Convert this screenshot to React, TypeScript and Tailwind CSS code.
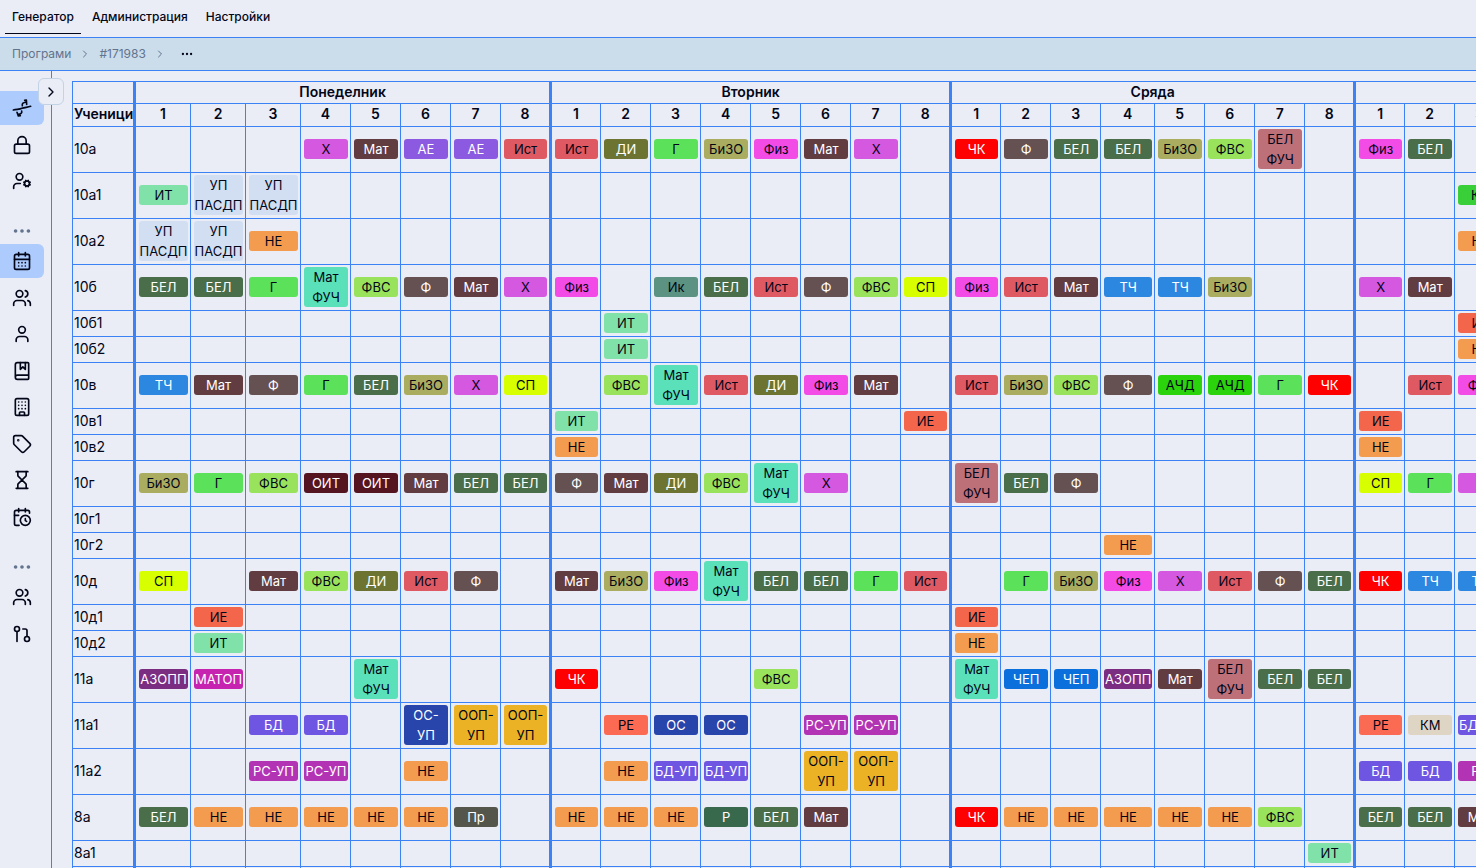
import { Fragment } from 'react';
import type { ReactNode } from 'react';
import clsx from 'clsx';
import {
  BookMarked,
  Building,
  CalendarClock,
  CalendarDays,
  ChevronRight,
  Ellipsis,
  GitPullRequest,
  Hourglass,
  Lock,
  Tag,
  User,
  UserCog,
  Users,
} from 'lucide-react';

type Lessons = Record<number, string>;

type Row = {
  name: string;
  days: Lessons[];
};

const DARK = 'text-slate-950';

const SUBJECTS: Record<string, string> = {
  Х: `bg-[#d558e0] ${DARK}`,
  Мат: 'bg-[#613d42] text-white',
  АЕ: 'bg-[#8c5ae0] text-white',
  Ист: `bg-[#de5961] ${DARK}`,
  ДИ: 'bg-[#6d7431] text-white',
  Г: `bg-[#5ce25a] ${DARK}`,
  БиЗО: `bg-[#aaad60] ${DARK}`,
  Физ: `bg-[#f34be6] ${DARK}`,
  ЧК: 'bg-[#ff0000] text-white',
  Ф: 'bg-[#665152] text-white',
  БЕЛ: 'bg-[#4a6e4a] text-white',
  ФВС: `bg-[#99e25c] ${DARK}`,
  'БЕЛ\nФУЧ': `bg-[#bd7078] ${DARK}`,
  ИТ: `bg-[#81e2a9] ${DARK}`,
  'УП\nПАСДП': `bg-[#d2dff2] ${DARK}`,
  НЕ: `bg-[#f39c4f] ${DARK}`,
  'Мат\nФУЧ': `bg-[#5be1b9] ${DARK}`,
  Ик: `bg-[#5c9282] ${DARK}`,
  СП: `bg-[#d8ff00] ${DARK}`,
  ТЧ: 'bg-[#2b87e0] text-white',
  АЧД: `bg-[#2bd30d] ${DARK}`,
  ИЕ: `bg-[#f4664c] ${DARK}`,
  ОИТ: 'bg-[#541420] text-white',
  АЗОПП: 'bg-[#7b2d82] text-white',
  МАТОП: 'bg-[#c624b0] text-white',
  ЧЕП: 'bg-[#0c70dc] text-white',
  БД: 'bg-[#6e55e2] text-white',
  'БД-УП': 'bg-[#6e55e2] text-white',
  ОС: 'bg-[#2745ab] text-white',
  'ОС-\nУП': 'bg-[#2745ab] text-white',
  'ООП-\nУП': `bg-[#ebb226] ${DARK}`,
  РЕ: `bg-[#fb6a53] ${DARK}`,
  КМ: `bg-[#dfd5c5] ${DARK}`,
  КН: `bg-[#38cf38] ${DARK}`,
  РС: 'bg-[#b233b4] text-white',
  'РС-УП': 'bg-[#b233b4] text-white',
  Р: 'bg-[#39694c] text-white',
  Пр: 'bg-[#54564b] text-white',
};

const DAYS = ['Понеделник', 'Вторник', 'Сряда', 'Четвъртък'];
const HOURS = [1, 2, 3, 4, 5, 6, 7, 8];

// column widths, one list for each day
const COLUMNS = [
  [55, 55, 55, 50, 50, 50, 50, 51],
  [49, 50, 50, 50, 50, 50, 50, 51],
  [49, 50, 50, 54, 50, 50, 50, 51],
  [49, 50, 50, 50, 50, 50, 50, 51],
];

const NAME_WIDTH = 63;
const TABLE_WIDTH = 1 + NAME_WIDTH + COLUMNS.flat().reduce((sum, w) => sum + w, 0);

const ROWS: Row[] = [
  {
    name: '10а',
    days: [
      { 4: 'Х', 5: 'Мат', 6: 'АЕ', 7: 'АЕ', 8: 'Ист' },
      { 1: 'Ист', 2: 'ДИ', 3: 'Г', 4: 'БиЗО', 5: 'Физ', 6: 'Мат', 7: 'Х' },
      { 1: 'ЧК', 2: 'Ф', 3: 'БЕЛ', 4: 'БЕЛ', 5: 'БиЗО', 6: 'ФВС', 7: 'БЕЛ\nФУЧ' },
      { 1: 'Физ', 2: 'БЕЛ' },
    ],
  },
  { name: '10а1', days: [{ 1: 'ИТ', 2: 'УП\nПАСДП', 3: 'УП\nПАСДП' }, {}, {}, { 3: 'КН' }] },
  { name: '10а2', days: [{ 1: 'УП\nПАСДП', 2: 'УП\nПАСДП', 3: 'НЕ' }, {}, {}, { 3: 'НЕ' }] },
  {
    name: '10б',
    days: [
      { 1: 'БЕЛ', 2: 'БЕЛ', 3: 'Г', 4: 'Мат\nФУЧ', 5: 'ФВС', 6: 'Ф', 7: 'Мат', 8: 'Х' },
      { 1: 'Физ', 3: 'Ик', 4: 'БЕЛ', 5: 'Ист', 6: 'Ф', 7: 'ФВС', 8: 'СП' },
      { 1: 'Физ', 2: 'Ист', 3: 'Мат', 4: 'ТЧ', 5: 'ТЧ', 6: 'БиЗО' },
      { 1: 'Х', 2: 'Мат' },
    ],
  },
  { name: '10б1', days: [{}, { 2: 'ИТ' }, {}, { 3: 'ИЕ' }] },
  { name: '10б2', days: [{}, { 2: 'ИТ' }, {}, { 3: 'НЕ' }] },
  {
    name: '10в',
    days: [
      { 1: 'ТЧ', 2: 'Мат', 3: 'Ф', 4: 'Г', 5: 'БЕЛ', 6: 'БиЗО', 7: 'Х', 8: 'СП' },
      { 2: 'ФВС', 3: 'Мат\nФУЧ', 4: 'Ист', 5: 'ДИ', 6: 'Физ', 7: 'Мат' },
      { 1: 'Ист', 2: 'БиЗО', 3: 'ФВС', 4: 'Ф', 5: 'АЧД', 6: 'АЧД', 7: 'Г', 8: 'ЧК' },
      { 2: 'Ист', 3: 'Физ' },
    ],
  },
  { name: '10в1', days: [{}, { 1: 'ИТ', 8: 'ИЕ' }, {}, { 1: 'ИЕ' }] },
  { name: '10в2', days: [{}, { 1: 'НЕ' }, {}, { 1: 'НЕ' }] },
  {
    name: '10г',
    days: [
      { 1: 'БиЗО', 2: 'Г', 3: 'ФВС', 4: 'ОИТ', 5: 'ОИТ', 6: 'Мат', 7: 'БЕЛ', 8: 'БЕЛ' },
      { 1: 'Ф', 2: 'Мат', 3: 'ДИ', 4: 'ФВС', 5: 'Мат\nФУЧ', 6: 'Х' },
      { 1: 'БЕЛ\nФУЧ', 2: 'БЕЛ', 3: 'Ф' },
      { 1: 'СП', 2: 'Г', 3: 'Х' },
    ],
  },
  { name: '10г1', days: [{}, {}, {}, {}] },
  { name: '10г2', days: [{}, {}, { 4: 'НЕ' }, {}] },
  {
    name: '10д',
    days: [
      { 1: 'СП', 3: 'Мат', 4: 'ФВС', 5: 'ДИ', 6: 'Ист', 7: 'Ф' },
      { 1: 'Мат', 2: 'БиЗО', 3: 'Физ', 4: 'Мат\nФУЧ', 5: 'БЕЛ', 6: 'БЕЛ', 7: 'Г', 8: 'Ист' },
      { 2: 'Г', 3: 'БиЗО', 4: 'Физ', 5: 'Х', 6: 'Ист', 7: 'Ф', 8: 'БЕЛ' },
      { 1: 'ЧК', 2: 'ТЧ', 3: 'ТЧ' },
    ],
  },
  { name: '10д1', days: [{ 2: 'ИЕ' }, {}, { 1: 'ИЕ' }, {}] },
  { name: '10д2', days: [{ 2: 'ИТ' }, {}, { 1: 'НЕ' }, {}] },
  {
    name: '11а',
    days: [
      { 1: 'АЗОПП', 2: 'МАТОП', 5: 'Мат\nФУЧ' },
      { 1: 'ЧК', 5: 'ФВС' },
      { 1: 'Мат\nФУЧ', 2: 'ЧЕП', 3: 'ЧЕП', 4: 'АЗОПП', 5: 'Мат', 6: 'БЕЛ\nФУЧ', 7: 'БЕЛ', 8: 'БЕЛ' },
      {},
    ],
  },
  {
    name: '11а1',
    days: [
      { 3: 'БД', 4: 'БД', 6: 'ОС-\nУП', 7: 'ООП-\nУП', 8: 'ООП-\nУП' },
      { 2: 'РЕ', 3: 'ОС', 4: 'ОС', 6: 'РС-УП', 7: 'РС-УП' },
      {},
      { 1: 'РЕ', 2: 'КМ', 3: 'БД-УП' },
    ],
  },
  {
    name: '11а2',
    days: [
      { 3: 'РС-УП', 4: 'РС-УП', 6: 'НЕ' },
      { 2: 'НЕ', 3: 'БД-УП', 4: 'БД-УП', 6: 'ООП-\nУП', 7: 'ООП-\nУП' },
      {},
      { 1: 'БД', 2: 'БД', 3: 'РС' },
    ],
  },
  {
    name: '8а',
    days: [
      { 1: 'БЕЛ', 2: 'НЕ', 3: 'НЕ', 4: 'НЕ', 5: 'НЕ', 6: 'НЕ', 7: 'Пр' },
      { 1: 'НЕ', 2: 'НЕ', 3: 'НЕ', 4: 'Р', 5: 'БЕЛ', 6: 'Мат' },
      { 1: 'ЧК', 2: 'НЕ', 3: 'НЕ', 4: 'НЕ', 5: 'НЕ', 6: 'НЕ', 7: 'ФВС' },
      { 1: 'БЕЛ', 2: 'БЕЛ', 3: 'Мат' },
    ],
  },
  { name: '8а1', days: [{}, {}, { 8: 'ИТ' }, {}] },
  { name: '8а2', days: [{}, {}, {}, {}] },
];

// subgroup names end in a digit; whole classes always get a two-line row
const isSubgroup = (name: string) => /\d$/.test(name);

function GenerateIcon() {
  return (
    <svg width="20" height="20" viewBox="0 0 60 60" fill="none" stroke="currentColor" strokeWidth="5" strokeLinecap="round" strokeLinejoin="round" aria-hidden="true">
      <path d="M4 36 C14 33 22 35 30 31 S46 29 56 25" />
      <path d="M31 23 C29 16 34 14 43 12 M38 7 L43 6 L44 19" />
      <path d="M29 39 C31 46 26 48 18 50 M15 43 L19 54 L25 53" />
    </svg>
  );
}

function NavLink({ children, active }: { children: ReactNode; active?: boolean }) {
  return (
    <a
      href="#"
      className={clsx('flex items-center border-b px-[7px] text-xs font-medium', active ? 'border-slate-950' : 'border-transparent')}
    >
      {children}
    </a>
  );
}

function SideButton({ label, children, active }: { label: string; children: ReactNode; active?: boolean }) {
  return (
    <button
      type="button"
      aria-label={label}
      className={clsx('flex h-[34px] w-11 items-center justify-center rounded-r-md', active && 'bg-[#adccfd]')}
    >
      {children}
    </button>
  );
}

function Sidebar() {
  return (
    <aside className="relative w-[52px] shrink-0 border-r border-[#3b82f6] pt-5">
      <button
        type="button"
        aria-label="Разгъни"
        className="absolute top-[7px] -right-[13px] flex h-[27px] w-[26px] items-center justify-center rounded-md border border-[#c3d3e6] bg-[#eaedf6]"
      >
        <ChevronRight size={16} />
      </button>
      <div className="flex h-[107px] flex-col justify-between">
        <SideButton label="Генериране" active><GenerateIcon /></SideButton>
        <SideButton label="Заключване"><Lock size={20} /></SideButton>
        <SideButton label="Потребител"><UserCog size={20} /></SideButton>
      </div>
      <div className="mt-[22px] mb-0.5 flex w-11 justify-center text-slate-500">
        <Ellipsis size={22} />
      </div>
      <div className="flex h-[290px] flex-col justify-between">
        <SideButton label="Програма" active><CalendarDays size={20} /></SideButton>
        <SideButton label="Класове"><Users size={20} /></SideButton>
        <SideButton label="Учители"><User size={20} /></SideButton>
        <SideButton label="Предмети"><BookMarked size={20} /></SideButton>
        <SideButton label="Сгради"><Building size={20} /></SideButton>
        <SideButton label="Етикети"><Tag size={20} /></SideButton>
        <SideButton label="Часове"><Hourglass size={20} /></SideButton>
        <SideButton label="Срокове"><CalendarClock size={20} /></SideButton>
      </div>
      <div className="mt-[22px] mb-0.5 flex w-11 justify-center text-slate-500">
        <Ellipsis size={22} />
      </div>
      <div className="flex h-[71px] flex-col justify-between">
        <SideButton label="Групи"><Users size={20} /></SideButton>
        <SideButton label="Връзки"><GitPullRequest size={20} /></SideButton>
      </div>
    </aside>
  );
}

function Timetable() {
  return (
    <table
      className="table-fixed border-separate border-spacing-0 border-t border-l border-[#3b82f6] text-sm"
      style={{ width: TABLE_WIDTH }}
    >
      <colgroup>
        <col style={{ width: NAME_WIDTH }} />
        {COLUMNS.flat().map((width, i) => (
          <col key={i} style={{ width }} />
        ))}
      </colgroup>
      <thead className="leading-4">
        <tr className="h-[22px]">
          <td className="border-r-3 border-b border-[#3b82f6]" />
          {DAYS.map((day) => (
            <th key={day} colSpan={8} className="border-r-3 border-b border-[#3b82f6] p-0 pb-0.5 font-semibold">
              {day}
            </th>
          ))}
        </tr>
        <tr className="h-[23px]">
          <th className="border-r-3 border-b border-[#3b82f6] p-0 pb-0.5 pl-px text-left font-semibold">Ученици</th>
          {DAYS.map((day) => (
            <Fragment key={day}>
              {HOURS.map((hour) => (
                <th
                  key={hour}
                  className={clsx('border-b border-[#3b82f6] p-0 pb-0.5 font-semibold', hour === 8 ? 'border-r-3' : 'border-r')}
                >
                  {hour}
                </th>
              ))}
            </Fragment>
          ))}
        </tr>
      </thead>
      <tbody>
        {ROWS.map((row) => (
          <tr key={row.name} className={isSubgroup(row.name) ? 'h-[26px]' : 'h-[46px]'}>
            <td className="border-r-3 border-b border-[#3b82f6] pt-0.5 pb-[3px] pl-px">{row.name}</td>
            {row.days.map((lessons, day) => (
              <Fragment key={day}>
                {HOURS.map((hour) => (
                  <td
                    key={hour}
                    className={clsx('border-b border-[#3b82f6] pt-0.5 pr-0.5 pb-[3px] pl-[3px]', hour === 8 ? 'border-r-3' : 'border-r')}
                  >
                    {lessons[hour] && (
                      <div className={clsx('rounded-[3px] text-center text-[13px] leading-5 whitespace-pre', SUBJECTS[lessons[hour]])}>
                        {lessons[hour]}
                      </div>
                    )}
                  </td>
                ))}
              </Fragment>
            ))}
          </tr>
        ))}
      </tbody>
    </table>
  );
}

export default function App() {
  return (
    <div className="flex h-screen flex-col overflow-hidden bg-[#eaedf6] font-[Inter,sans-serif] text-slate-950">
      <header className="shrink-0 border-b border-[#3b82f6] pb-[3px]">
        <nav className="flex h-[34px] gap-1 pl-[5px]">
          <NavLink active>Генератор</NavLink>
          <NavLink>Администрация</NavLink>
          <NavLink>Настройки</NavLink>
        </nav>
      </header>
      <nav className="flex h-[33px] shrink-0 items-center gap-2 border-b border-[#3b82f6] bg-[#cbdcea] pl-3 text-xs text-slate-500">
        <a href="#">Програми</a>
        <ChevronRight size={12} />
        <a href="#">#171983</a>
        <ChevronRight size={12} />
        <button type="button" aria-label="Още" className="ml-1.5 text-slate-950">
          <Ellipsis size={14} />
        </button>
      </nav>
      <div className="flex min-h-0 flex-1">
        <Sidebar />
        <main className="min-w-0 flex-1 overflow-hidden pt-2.5 pl-5">
          <Timetable />
        </main>
      </div>
    </div>
  );
}
